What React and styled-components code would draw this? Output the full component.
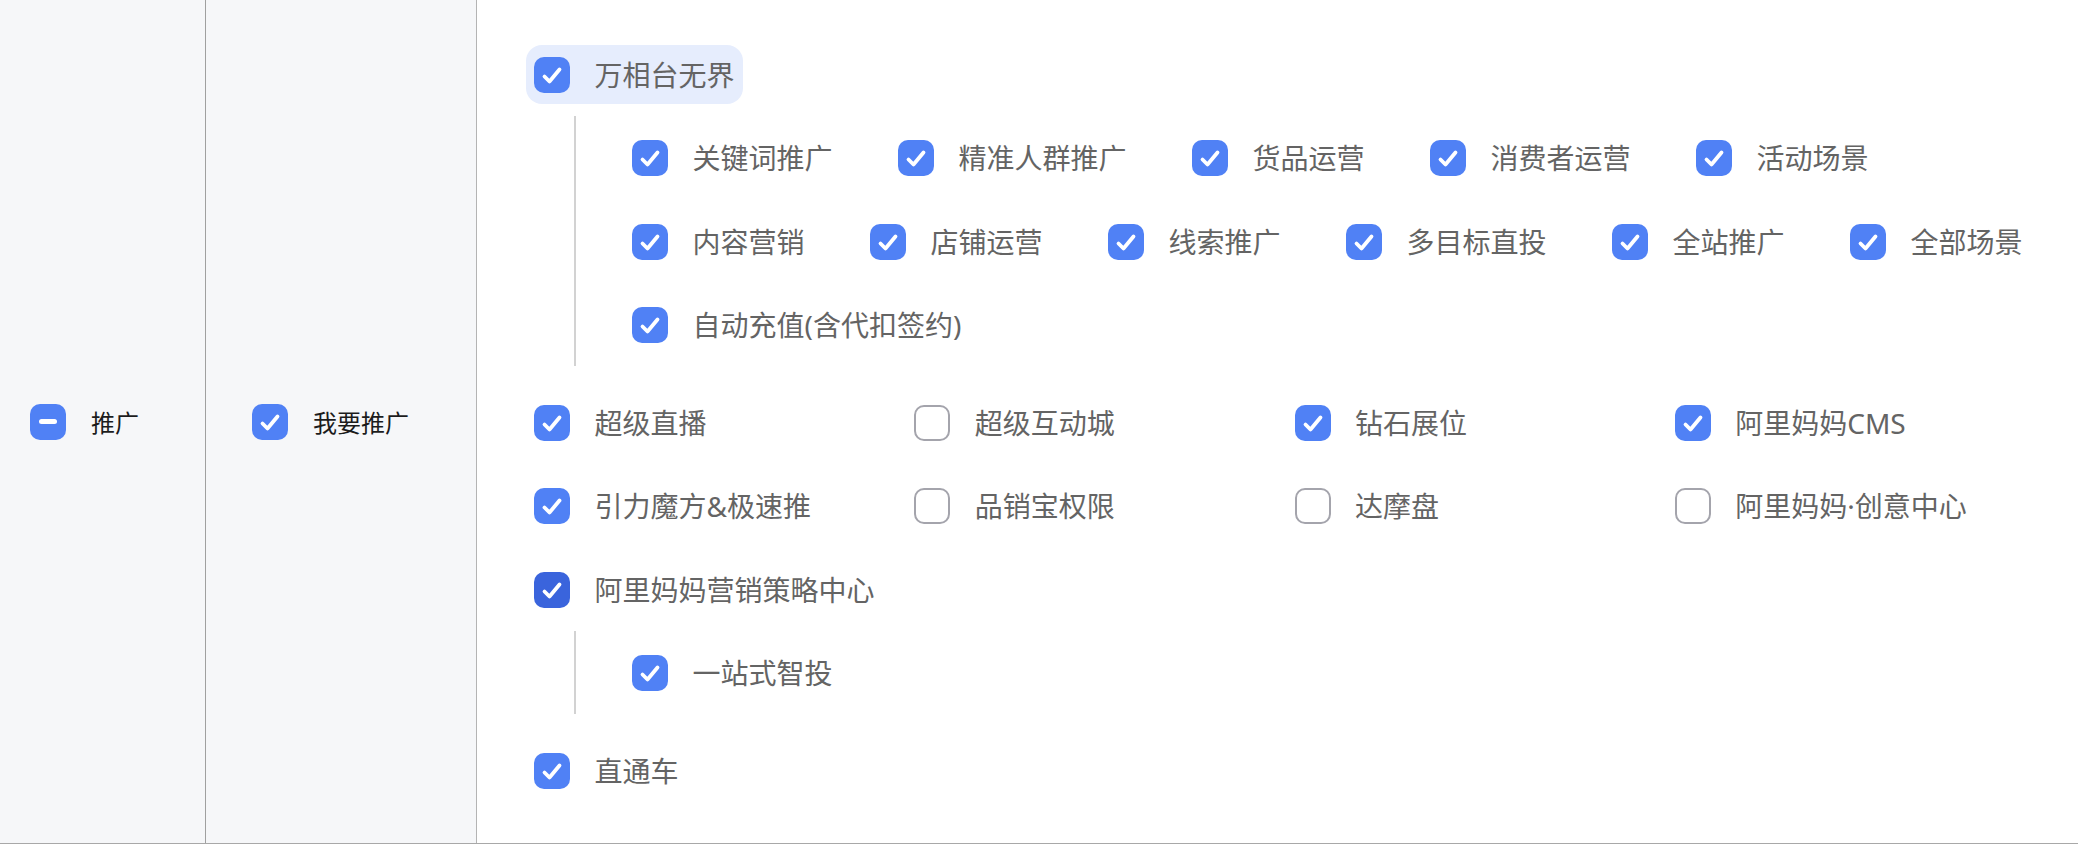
import React from "react";
import styled, { createGlobalStyle } from "styled-components";

const GlobalStyle = createGlobalStyle`
  body {
    margin: 0;
    background: #fff;
    font-family: "Noto Sans CJK SC", "Noto Sans", sans-serif;
  }
`;

const groups = [
  {
    label: "万相台无界",
    checked: true,
    highlight: true,
    children: [
      "关键词推广",
      "精准人群推广",
      "货品运营",
      "消费者运营",
      "活动场景",
      "内容营销",
      "店铺运营",
      "线索推广",
      "多目标直投",
      "全站推广",
      "全部场景",
      "自动充值(含代扣签约)",
    ],
  },
  { label: "超级直播", checked: true },
  { label: "超级互动城", checked: false },
  { label: "钻石展位", checked: true },
  { label: "阿里妈妈CMS", checked: true },
  { label: "引力魔方&极速推", checked: true },
  { label: "品销宝权限", checked: false },
  { label: "达摩盘", checked: false },
  { label: "阿里妈妈·创意中心", checked: false },
  {
    label: "阿里妈妈营销策略中心",
    checked: true,
    active: true,
    children: ["一站式智投"],
  },
  { label: "直通车", checked: true },
];

const Box = styled.span`
  flex: none;
  width: 36px;
  height: 36px;
  box-sizing: border-box;
  border-radius: 10px;
  display: flex;
  align-items: center;
  justify-content: center;
  background: ${(p) => (p.$on ? (p.$active ? "#3a64dc" : "#5081f5") : "#fff")};
  border: ${(p) => (p.$on ? "none" : "2px solid #a4a4ac")};
`;

const Bar = styled.span`
  width: 18px;
  height: 5px;
  border-radius: 3px;
  background: #fff;
`;

function Checkbox({ checked, indeterminate, active }) {
  return (
    <Box $on={checked || indeterminate} $active={active}>
      {indeterminate ? (
        <Bar />
      ) : checked ? (
        <svg width="36" height="36" viewBox="0 0 36 36">
          <path
            d="M10.5 19.5 L15.5 24.5 L25.5 12.5"
            fill="none"
            stroke="#fff"
            strokeWidth="3.8"
            strokeLinecap="round"
            strokeLinejoin="round"
          />
        </svg>
      ) : null}
    </Box>
  );
}

const Table = styled.div`
  display: flex;
  width: 2078px;
  border-bottom: 1px solid #a8a8a8;
  background: #fff;
`;

const SideCell = styled.div`
  flex: none;
  width: ${(p) => p.$width}px;
  box-sizing: border-box;
  padding-left: ${(p) => p.$pad}px;
  background: #f6f7f9;
  border-right: 1px solid ${(p) => p.$line};
  display: flex;
  align-items: center;
  gap: 25px;
`;

const SideLabel = styled.span`
  font-size: 24px;
  line-height: 1;
  color: #1c1c1c;
`;

const Main = styled.div`
  flex: 1;
  padding: 45px 31px 43px 49px;
  display: grid;
  grid-template-columns: repeat(4, 1fr);
  row-gap: 24.5px;
  align-content: start;
`;

const Group = styled.div`
  grid-column: ${(p) => (p.$wide ? "1 / -1" : "auto")};
  margin-bottom: ${(p) => (p.$wide ? "3px" : "0")};
  display: flex;
  flex-direction: column;
  align-items: flex-start;
`;

const Item = styled.label`
  height: 59px;
  box-sizing: border-box;
  padding: 0 8px 0 8px;
  display: inline-flex;
  align-items: center;
  gap: 24.5px;
  border-radius: 16px;
  background: ${(p) => (p.$highlight ? "#e6edfd" : "transparent")};
  cursor: pointer;
`;

const ItemText = styled.span`
  font-family: "Noto Sans", "Noto Sans CJK SC", sans-serif;
  font-size: 28px;
  line-height: 1;
  color: #646464;
  white-space: nowrap;
`;

const Children = styled.div`
  margin: 11.5px 0 0 48px;
  padding: 13px 0 11px 48px;
  border-left: 2px solid #d2d2d2;
  display: flex;
  flex-wrap: wrap;
  column-gap: 49.5px;
  row-gap: 24.5px;
  align-self: stretch;
`;

export default function App() {
  return (
    <>
      <GlobalStyle />
      <Table>
        <SideCell $width={206} $pad={30} $line="#a0a0a0">
          <Checkbox indeterminate />
          <SideLabel>推广</SideLabel>
        </SideCell>
        <SideCell $width={271} $pad={46} $line="#b4b4b4">
          <Checkbox checked />
          <SideLabel>我要推广</SideLabel>
        </SideCell>
        <Main>
          {groups.map((g) => (
            <Group key={g.label} $wide={!!g.children}>
              <Item $highlight={g.highlight}>
                <Checkbox checked={g.checked} active={g.active} />
                <ItemText>{g.label}</ItemText>
              </Item>
              {g.children && (
                <Children>
                  {g.children.map((c) => (
                    <Item key={c}>
                      <Checkbox checked />
                      <ItemText>{c}</ItemText>
                    </Item>
                  ))}
                </Children>
              )}
            </Group>
          ))}
        </Main>
      </Table>
    </>
  );
}
